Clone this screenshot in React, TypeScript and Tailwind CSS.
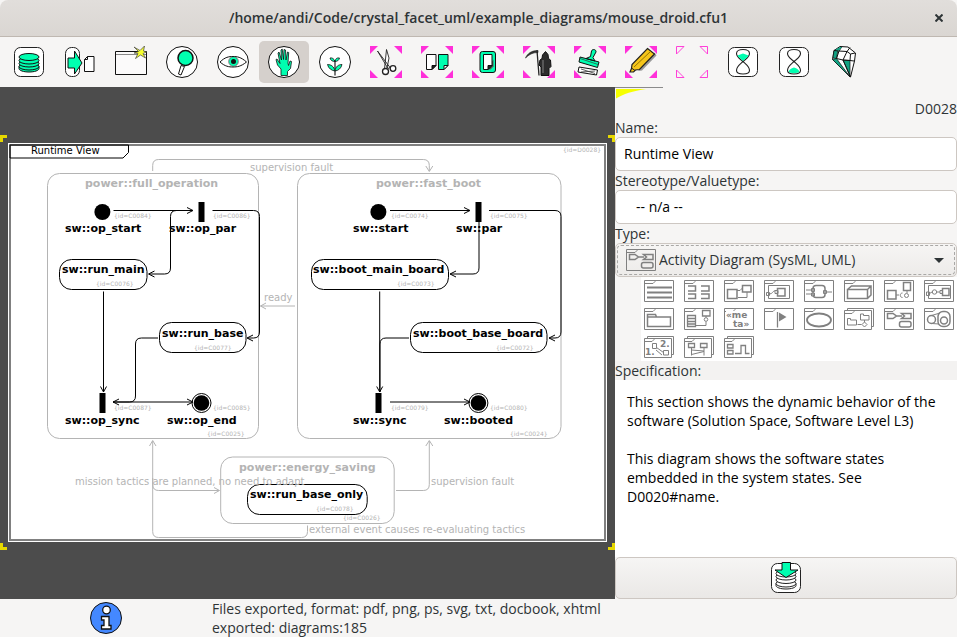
import type { ReactNode } from "react";

const GREEN = "#00ffb0";
const DIM = "#b4b4b4";

/* ---------- toolbar icons (32 x 32) ---------- */

function Round() {
  return <circle cx="16" cy="16" r="15.5" fill="#fff" stroke="#111" />;
}

function Box() {
  return <rect x="1.5" y="1.5" width="29" height="29" rx="6" fill="#fff" stroke="#222" />;
}

function Corners({ hollow = false }: { hollow?: boolean }) {
  return hollow ? (
    <path d="M.5.5H8L.5 8zM31.5.5H24l7.5 7.5zM.5 31.5H8L.5 24zM31.5 31.5H24l7.5-7.5z" fill="none" stroke="#ff40d9" />
  ) : (
    <path d="M0 0h8L0 8zM32 0h-8l8 8zM0 32h8l-8-8zM32 32h-8l8-8z" fill="#ff30d9" />
  );
}

const hourglass =
  "M16 15.5C12 12 9.500 11 9.500 7.500C9.500 4.500 12.500 3.500 16 3.500S22.500 4.500 22.500 7.500C22.500 11 20 12 16 15.500C20 19 22.500 20.500 22.500 24.500C22.500 27 19.500 28 16 28S9.500 27 9.500 24.500C9.500 20.500 12 19 16 15.500z";

const tools: { label: string; active?: boolean; art: ReactNode }[] = [
  {
    label: "Use database",
    art: (
      <>
        <Box />
        <g fill={GREEN} stroke="#111">
          <path d="M6 20.500v2c0 2 4.500 3.500 10 3.500s10-1.500 10-3.500v-2z" />
          <ellipse cx="16" cy="20.500" rx="10" ry="3.500" />
          <ellipse cx="16" cy="17.500" rx="10" ry="3.500" />
          <ellipse cx="16" cy="14.500" rx="10" ry="3.500" />
          <ellipse cx="16" cy="11" rx="10" ry="3.500" />
        </g>
      </>
    ),
  },
  {
    label: "Export",
    art: (
      <>
        <rect x="1.500" y="1.500" width="14" height="29" rx="6" fill="#fff" stroke="#222" />
        <path d="M4 12h6.500V5l7.500 12-7.500 11v-6H4z" fill={GREEN} stroke="#111" />
        <path d="M20.500 13.500l3-3h6.500v15h-9.500zM20.500 13.500h3v-3" fill="#fff" stroke="#111" />
      </>
    ),
  },
  {
    label: "New window",
    art: (
      <>
        <path d="M.5 5.500h31v23H.5z" fill="#fbfafa" stroke="#111" />
        <path d="M1 8.500h30" stroke="#888" />
        <path d="M19 1l6 3.500L29.500 0l-1 5 3 1-3.500 1.500 2.500 4.500-5-3-5 3.500 2.500-5-4-.5 4.500-1.500z" fill="#f6ff2e" stroke="#444" strokeWidth=".7" />
      </>
    ),
  },
  {
    label: "Search",
    art: (
      <>
        <Round />
        <path d="M15 19.500l-2.500 8.500 2.500 1 3.500-8.500z" fill="#fff" stroke="#111" />
        <circle cx="19.500" cy="12" r="7.500" fill={GREEN} stroke="#111" strokeWidth="1.500" />
      </>
    ),
  },
  {
    label: "Navigate",
    art: (
      <>
        <Round />
        <path d="M3 16C8 11 12 10.500 16 10.500S24 11 29.500 16C24 20.500 20 21 16 21S8 20.500 3 16z" fill="#fff" stroke="#111" />
        <circle cx="16.500" cy="15.500" r="3.500" fill="#111" stroke={GREEN} strokeWidth="2" />
        <circle cx="16.500" cy="15.500" r="4.800" fill="none" stroke="#222" strokeWidth=".6" />
      </>
    ),
  },
  {
    label: "Edit",
    active: true,
    art: (
      <>
        <Round />
        <path
          d="M13 29.500v-6.500L9.500 19 8 13.500l1-.5 3 4.500L10 7l1-1 2.500 8L13 4l1.200-1 1.300 10.500L16 3.500l1.500.5.5 10L19.500 6l1.200.5-.7 10.500.5 2.500 1.500-4.500 1.500.5-1 7-3 3v4z"
          fill={GREEN} stroke="#111" strokeWidth=".8" />
      </>
    ),
  },
  {
    label: "Create",
    art: (
      <>
        <Round />
        <path d="M16 29.500V14" stroke="#222" strokeWidth="1.200" />
        <path d="M16 15.500c-1-3-3-4-5-3.500.5 2.500 2.500 3.500 5 3.500zM16 15.500c.5-3 2-4 4.500-3.500-.5 2.500-2.500 3.500-4.500 3.500zM16 25c-1-4.500-4-6.500-7.500-6.500 1 4 4 6 7.500 6.500zM16 25c.5-4.500 3.500-6.500 7-6.500-1 4-3.500 6-7 6.500z" fill={GREEN} stroke="#111" strokeWidth=".8" />
      </>
    ),
  },
  {
    label: "Cut",
    art: (
      <>
        <Corners />
        <path d="M7.500 5L18 22.500l2-1zM16.500 3.500L14.500 23l2.500-1 2-10z" fill="#fff" stroke="#222" strokeWidth=".9" />
        <circle cx="15.500" cy="25.500" r="3" fill="#fff" stroke="#222" strokeWidth="1.300" />
        <circle cx="23" cy="22.500" r="2.800" fill="#fff" stroke="#222" strokeWidth="1.300" />
      </>
    ),
  },
  {
    label: "Copy",
    art: (
      <>
        <Corners />
        <path d="M5.500 8.500H15v11l-4 4H5.500z" fill="#fff" stroke="#111" />
        <path d="M15 19.500h-4v4z" fill="#222" stroke="#111" />
        <path d="M17.500 8.500H27v11l-4 4h-5.500z" fill={GREEN} stroke="#111" />
        <path d="M27 19.500h-4v4z" fill="#fff" stroke="#111" />
      </>
    ),
  },
  {
    label: "Paste",
    art: (
      <>
        <Corners />
        <rect x="8" y="5.500" width="15.500" height="21" rx="2.500" fill={GREEN} stroke="#111" />
        <path d="M13.500 23.500l8-10v7l-3 3z" fill="#555" />
        <path d="M11.500 8.500h8.500v11l-4 4h-4.500z" fill="#fff" stroke="#111" />
        <path d="M20 19.500h-4v4z" fill="#222" stroke="#111" />
      </>
    ),
  },
  {
    label: "Delete",
    art: (
      <>
        <Corners />
        <path d="M14 4.500L16 29.500" stroke="#222" strokeWidth="1.300" />
        <path d="M2.500 12C4.500 7.500 8.500 4.500 15 4.500v2C9.500 6.500 6 8.500 2.500 12z" fill="#333" stroke="#111" strokeWidth=".6" />
        <path d="M19 12.500l.5-3.500 3-3.500 2.500 3 .5 4 2 1.500.5 6.500L26 22.500v7H18v-8.500L16 19l1-5z" fill="#2c2c2c" stroke="#111" />
        <path d="M20 14v13" stroke="#666" strokeWidth="1.500" />
      </>
    ),
  },
  {
    label: "Instantiate",
    art: (
      <>
        <Corners />
        <path d="M6 11l19 5-1.500 5.500L5 16zM12 12.500l4.500-2L17.500 5c1-2.500 5-1.500 4.500 1l-3 5.500 2 3.500z" fill={GREEN} stroke="#111" />
        <path d="M6 12.500l18 6" stroke="#333" strokeWidth=".7" />
        <path d="M5 21l18.500 3-1 5L4 26z" fill="#fff" stroke="#111" />
        <path d="M7 23l14 4.500M7 26l14-1" stroke="#333" strokeWidth=".8" />
      </>
    ),
  },
  {
    label: "Highlight",
    art: (
      <>
        <Corners />
        <path d="M13 25L29.500 6.500l2 3L17 24.500z" fill="#999" />
        <path d="M22.500 2.500L29.500 8 14.500 23.500l-4 .5-2 2H5l1.500-3.500.5-4z" fill="#f5c51a" stroke="#222" strokeWidth="1.200" />
        <path d="M9 21L26 5" stroke="#8a6d00" strokeWidth=".9" />
        <path d="M6.500 22l3.500 2.500" stroke="#222" />
      </>
    ),
  },
  { label: "Reset selection", art: <Corners hollow /> },
  {
    label: "Undo",
    art: (
      <>
        <Box />
        <path d={hourglass} fill="#fff" stroke="#222" strokeWidth="1.100" />
        <path d="M16 15C14 13 11.500 11.500 10.500 9.500L16 7.500l5.500 2C20.500 11.500 18 13 16 15z" fill={GREEN} />
      </>
    ),
  },
  {
    label: "Redo",
    art: (
      <>
        <Box />
        <path d="M10.500 26C11 23.500 13 22.500 16 21.500C19 22.500 21 23.500 21.500 26C20 27.500 12 27.500 10.500 26z" fill={GREEN} />
        <path d={hourglass} fill="none" stroke="#222" strokeWidth="1.100" />
      </>
    ),
  },
  {
    label: "About",
    art: (
      <>
        <path d="M3.500 13.500L5 4.500l6-4 8 .5 7.500 6-1 8L21.500 31z" fill="#fff" stroke="#111" />
        <path d="M3.500 13.500l4-1L21 31zM5 4.500L4 12l3.500.5L9 4zM14 14l7 .5V30z" fill="#12a383" stroke="#111" strokeWidth=".7" />
        <path d="M5 4.500L10 5l8 .5 3-4M10 5L7.500 12.500 14 14l4-8.500 3.500 2.500L26 7M21.500 8L21 14.500l4 .5M21 14.500L14 14l7.500 17M10 5l3-4.500" fill="none" stroke="#111" />
        <path d="M6 4L11 1l2 0-3 3.500z" fill="#12a383" />
      </>
    ),
  },
];

/* ---------- diagram type icons (30 x 22) ---------- */

function Frame() {
  return <path d="M.5.5h29v21H.5zM.5 3.500H9l2-2V.5" />;
}

function FrameStack() {
  return <path d="M.5 2.500h27v19H.5zM3.500 2.500v-2h26v18h-2M.5 5.500H8l2-2v-1" />;
}

function GlyphText({ x, y, children }: { x: number; y: number; children: string }) {
  return (
    <text x={x} y={y} fill="#808080" stroke="none" className="font-['DejaVu_Sans',sans-serif] text-[9px] font-bold">
      {children}
    </text>
  );
}

const activityArt = (
  <>
    <Frame />
    <path d="M3.500 5.500H9l3.500 2.500L9 10.500H3.500zM12.500 8H18M17.500 5.500h9.500v5H17.500l3-2.500z" strokeWidth="1.500" />
    <rect x="15.500" y="13.500" width="11.500" height="5.500" rx="2" strokeWidth="1.500" />
  </>
);

const types: { label: string; art: ReactNode }[] = [
  { label: "List", art: <><Frame /><path d="M3 7.500h25M3 12.500h25M3 17.500h25" strokeWidth="2" /></> },
  {
    label: "Box",
    art: <><Frame /><path d="M4 6h7.500v5H4M17 6h8v5h-8M4 14h7.500v4.500H4M17 14h8v4.500h-8" strokeWidth="1.500" /></>,
  },
  {
    label: "Block definition",
    art: <><Frame /><path d="M3.500 9.500h9.500v9H3.500zM18.500 5.500H27V12h-8.500z" strokeWidth="1.500" /><path d="M13 10.500h3l2.500-2.500M14 17.500h9V12" /></>,
  },
  {
    label: "Internal block",
    art: <><Frame /><path d="M4.500 5.500h21v13h-21z" /><path d="M13.500 8.500H21V16h-7.500z" strokeWidth="1.500" /><path d="M2.500 12.500h3v3h-3zM5.500 14c3 0 3-3 6-3.500M11 10.500h3v3h-3z" /></>,
  },
  {
    label: "Parametric",
    art: <><Frame /><rect x="9" y="5.500" width="12" height="12" rx="3" strokeWidth="1.500" /><path d="M2 10h6M2 14h6M23 12h5M7.500 8.500h3v3h-3zM7.500 13h3v3h-3zM19.500 10.500h3v3h-3z" /></>,
  },
  {
    label: "Deployment",
    art: <><Frame /><path d="M3.500 9.500h20v9h-20zM3.500 9.500l4-3.500H27v9l-3.500 3.500M23.500 9.500L27 6" strokeWidth="1.500" /></>,
  },
  {
    label: "Component",
    art: <><Frame /><path d="M3.500 10.500h8.500v8.500H3.500zM19.500 2.500h7v8h-7z" strokeWidth="1.500" /><path d="M12 15h3M18.500 13c-3 0-3 4.500 0 4.500M23 10.500V13" /><circle cx="22.500" cy="15.500" r="2" /></>,
  },
  {
    label: "Composite structure",
    art: <><Frame /><path d="M4.500 5.500h22v13h-22z" /><path d="M18.500 8.500H25v7h-6.500z" strokeWidth="1.500" /><path d="M2.500 12h3v3.500h-3zM5.500 13.500L8 12M13 12h3M16 10.500h2.500v3H16z" /><circle cx="10.500" cy="12" r="2.200" /></>,
  },
  {
    label: "Package",
    art: <><Frame /><path d="M3.500 18.500v-12h8l1 2.500h14v9.500zM3.500 9h9" strokeWidth="1.500" /></>,
  },
  {
    label: "Class",
    art: <><Frame /><path d="M3.500 7.500h8v11h-8zM3.500 10.500h8M3.500 13.500h8M3.500 16h8M18.500 2.500h7.500v5.500h-7.500z" strokeWidth="1.300" /><path d="M11.500 17.500H22v-4M22 8v1.500" /><circle cx="22" cy="11.500" r="1.800" /></>,
  },
  {
    label: "Profile",
    art: <><Frame /><rect x="2" y="3" width="26" height="17" fill="#fff" stroke="none" /><GlyphText x={2} y={10}>«me</GlyphText><GlyphText x={9} y={19}>ta»</GlyphText></>,
  },
  { label: "Requirements", art: <><Frame /><path d="M13.500 4v15.500" strokeWidth="1.300" /><path d="M15 4.500v9l7.500-4.500z" fill="#808080" stroke="none" /></> },
  { label: "Use case", art: <><Frame /><ellipse cx="15" cy="12" rx="12" ry="6.500" strokeWidth="1.800" /></> },
  {
    label: "Interaction overview",
    art: <><FrameStack /><path d="M3.500 10.500h3V12h6v5h-9zM16.500 6h3v1.500H25V12h-8.500z" /><path d="M13.500 16.500h4M20.500 12v2M20.500 14l2.500 2.500L20.500 19 18 16.500z" /></>,
  },
  { label: "Activity", art: activityArt },
  {
    label: "State machine",
    art: <><Frame /><circle cx="7.500" cy="11.500" r="4" strokeWidth="1.500" /><rect x="14" y="3.500" width="12" height="15" rx="5" strokeWidth="1.500" /><circle cx="20" cy="12.500" r="3.500" strokeWidth="1.500" /><path d="M7.500 7.500L16 5M8 15.500l7 .5" /></>,
  },
  {
    label: "Communication",
    art: <><FrameStack /><GlyphText x={1} y={19}>1.</GlyphText><GlyphText x={16} y={11}>2.</GlyphText><path d="M8.500 7.500h4v5h-4zM19.500 14.500h5v4.500h-5zM12.500 11.500l7 5M12 14l6 5" /></>,
  },
  {
    label: "Sequence",
    art: <><FrameStack /><path d="M4.500 7.500h6v4h-6zM16.500 7.500h6.500v4h-6.500z" strokeWidth="1.300" /><path d="M7.500 11.500v8M20 11.500v8M7.500 14l12.500 1M7.500 18.500L20 15.500" /></>,
  },
  {
    label: "Timing",
    art: <><FrameStack /><path d="M3.500 8.500h5.500v3.500H3.500zM3.500 14.500h5.500V18H3.500z" strokeWidth="1.300" /><path d="M11 17.500h6v-8h4.500v8h4" strokeWidth="1.300" /></>,
  },
];

function TypeIcon({ children, className = "" }: { children: ReactNode; className?: string }) {
  return (
    <svg viewBox="0 0 30 22" fill="none" stroke="#808080" aria-hidden="true" className={`block h-[22px] w-[30px] ${className}`}>
      {children}
    </svg>
  );
}

/* ---------- the state diagram ---------- */

type Tone = "black" | "dim";
const tone = (t: Tone) => (t === "black" ? "#000" : DIM);

function Title({ x, y, t = "black", children }: { x: number; y: number; t?: Tone; children: string }) {
  return <text x={x} y={y} fill={tone(t)} className="text-[11px] font-bold">{children}</text>;
}

function Id({ x, y, id }: { x: number; y: number; id: string }) {
  return <text x={x} y={y} fill={DIM} className="text-[6px]">{`{id=${id}}`}</text>;
}

function Note({ x, y, children }: { x: number; y: number; children: string }) {
  return <text x={x} y={y} fill={DIM} className="text-[10px]">{children}</text>;
}

function State({ x, y, w, h, t = "black" }: { x: number; y: number; w: number; h: number; t?: Tone }) {
  return <rect x={x} y={y} width={w} height={h} rx="12" fill="none" stroke={tone(t)} />;
}

function Wire({ d, t = "black" }: { d: string; t?: Tone }) {
  return <path d={d} fill="none" stroke={tone(t)} />;
}

function Final({ x, y }: { x: number; y: number }) {
  return (
    <>
      <circle cx={x} cy={y} r="9.500" fill="none" stroke="#000" />
      <circle cx={x} cy={y} r="7.800" />
    </>
  );
}

function Diagram() {
  return (
    <svg viewBox="0 87 615 512" role="img" aria-label="Runtime View" className="block h-full w-full font-['DejaVu_Sans',sans-serif]">
      <path d="M0 135h7v3H3v4H0zM615 135h-7v3h4v4h3zM0 550h7v-3H3v-4H0zM615 550h-7v-3h4v-4h3z" fill="#e6d800" />
      <rect x="8" y="143" width="599" height="399" fill="#fff" />
      <rect x="10" y="145" width="595" height="395" fill="none" stroke="#808080" strokeWidth="2" />
      <path d="M10 145H128.500V152.500L123 158H10z" fill="none" stroke="#000" />
      <text x="31" y="154" className="text-[10px]">Runtime View</text>
      <Id x={563} y={152} id="D0028" />

      <Wire t="dim" d="M152.700 171V165.500Q152.700 159.500 158.700 159.500H423.300Q429.300 159.500 429.300 165.500V171M425.800 166L429.300 171.500L432.800 166" />
      <Note x={250} y={171}>supervision fault</Note>

      <State t="dim" x={47.5} y={173.5} w={211} h={265} />
      <Title t="dim" x={85} y={187}>power::full_operation</Title>
      <circle cx="102.400" cy="212" r="8" />
      <Id x={114} y={218} id="C0084" />
      <Title x={65} y={232}>sw::op_start</Title>
      <rect x="198.500" y="202" width="6" height="20" />
      <Id x={213} y={218} id="C0086" />
      <Title x={169} y={232}>sw::op_par</Title>
      <Wire d="M113.500 210.500H192.500M187 207.500L193 210.500L187 213.500" />
      <Wire d="M187 210.500H176.500Q170.500 210.500 170.500 216.500V268Q170.500 274 164.500 274H149M154.500 271L148.500 274L154.500 277" />
      <Wire d="M212.500 210.500H253.500Q259.500 210.500 259.500 216.500V332Q259.500 338 253.500 338H247.500M253 335L247 338L253 341" />
      <State x={59.5} y={259.5} w={87.5} h={30} />
      <Title x={62} y={273}>sw::run_main</Title>
      <Id x={96} y={286} id="C0076" />
      <State x={159.5} y={322.5} w={86.5} h={30} />
      <Title x={162} y={337}>sw::run_base</Title>
      <Id x={194} y={350} id="C0077" />
      <Wire d="M103.500 291.500V392M100.500 386.500L103.500 392L106.500 386.500" />
      <Wire d="M158 338H141.500Q135.500 338 135.500 344V396Q135.500 402 129.500 402H113M119 399L113 402L119 405" />
      <Wire d="M113 402H192.500M187 399L193 402L187 405" />
      <rect x="99.500" y="393" width="6" height="20" />
      <Final x={201.5} y={403} />
      <Id x={114} y={410} id="C0087" />
      <Id x={213} y={410} id="C0085" />
      <Title x={65} y={424}>sw::op_sync</Title>
      <Title x={167} y={424}>sw::op_end</Title>
      <Id x={207} y={436} id="C0025" />

      <Wire t="dim" d="M295 306H260.500M266 303L260.500 306L266 309" />
      <Note x={264} y={301}>ready</Note>

      <State t="dim" x={297.5} y={173.5} w={263.5} h={265} />
      <Title t="dim" x={376} y={187}>power::fast_boot</Title>
      <circle cx="378.400" cy="212" r="8" />
      <Id x={391} y={218} id="C0074" />
      <Title x={353} y={232}>sw::start</Title>
      <rect x="475.500" y="202" width="6" height="20" />
      <Id x={490} y={218} id="C0075" />
      <Title x={456} y={232}>sw::par</Title>
      <Wire d="M390 210.500H469.500M464 207.500L470 210.500L464 213.500" />
      <Wire d="M489 210.500H555Q561 210.500 561 216.500V332Q561 338 555 338H549M555 335L549 338L555 341" />
      <Wire d="M479 222V268Q479 274 473 274H450.500M456 271L450 274L456 277" />
      <State x={311.5} y={259.5} w={137} h={30} />
      <Title x={313} y={273}>sw::boot_main_board</Title>
      <Id x={397} y={286} id="C0073" />
      <State x={410.5} y={322.5} w={136.5} h={30} />
      <Title x={413} y={337}>sw::boot_base_board</Title>
      <Id x={496} y={350} id="C0072" />
      <Wire d="M379.700 291.500V392M376.700 386.500L379.700 392L382.700 386.500" />
      <Wire d="M409 338H386Q380 338 380 344V392" />
      <rect x="375.500" y="393" width="6" height="20" />
      <Wire d="M390 402H469.500M464 399L470 402L464 405" />
      <Final x={478.4} y={403} />
      <Id x={391} y={410} id="C0079" />
      <Id x={490} y={410} id="C0080" />
      <Title x={353} y={424}>sw::sync</Title>
      <Title x={444} y={424}>sw::booted</Title>
      <Id x={510} y={436} id="C0024" />

      <Wire t="dim" d="M152.700 441V531.500Q152.700 537.500 158.700 537.500H301.500Q307.500 537.500 307.500 531.500V525.500M149.500 446L152.700 440.500L156 446" />
      <Wire t="dim" d="M152.700 478V484.500Q152.700 490.500 158.700 490.500H219M214 487.500L219.500 490.500L214 493.500" />
      <State t="dim" x={220.7} y={457} w={173.5} h={66.5} />
      <Title t="dim" x={239} y={471}>power::energy_saving</Title>
      <State x={247.5} y={484.5} w={119.7} h={30} />
      <Title x={250} y={498}>sw::run_base_only</Title>
      <Note x={75} y={485}>mission tactics are planned, no need to adapt</Note>
      <Id x={316} y={511} id="C0078" />
      <Id x={343} y={520} id="C0026" />
      <Wire t="dim" d="M396 490.500H423.300Q429.300 490.500 429.300 484.500V441M425.800 446L429.300 440.500L432.800 446" />
      <Note x={431} y={485}>supervision fault</Note>
      <Note x={309} y={533}>external event causes re-evaluating tactics</Note>
    </svg>
  );
}

/* ---------- window ---------- */

const specification = `This section shows the dynamic behavior of the software (Solution Space, Software Level L3)

This diagram shows the software states embedded in the system states. See D0020#name.`;

export default function App() {
  return (
    <div className="flex min-h-screen flex-col bg-[#f6f5f4] font-['Open_Sans','Noto_Sans',sans-serif] text-sm leading-[19px] text-[#2e3436]">
      <header className="flex h-[37px] items-center rounded-t-lg border-b border-[#bfb8b1] bg-linear-to-b from-[#e1dedb] to-[#dad6d2] px-2">
        <span className="w-5" />
        <h1 className="flex-1 text-center text-sm font-semibold">/home/andi/Code/crystal_facet_uml/example_diagrams/mouse_droid.cfu1</h1>
        <button type="button" aria-label="Close" className="grid size-5 place-items-center">
          <svg viewBox="0 0 8 8" className="size-2" stroke="#2e3436" strokeWidth="2" aria-hidden="true">
            <path d="M.5.500l7 7M7.500.500l-7 7" />
          </svg>
        </button>
      </header>

      <nav aria-label="Tools" className="flex h-[50px] items-center gap-px px-1">
        {tools.map((tool) => (
          <button
            key={tool.label}
            type="button"
            aria-label={tool.label}
            aria-pressed={tool.active ?? false}
            className={`grid h-[42px] w-[50px] place-items-center rounded-[5px] ${tool.active ? "bg-[#d5d0cc]" : ""}`}
          >
            <svg viewBox="0 0 32 32" fill="none" aria-hidden="true" className="size-8">{tool.art}</svg>
          </button>
        ))}
      </nav>

      <main className="flex flex-1">
        <section aria-label="Diagram" className="min-w-0 flex-1 bg-[#4c4c4c]">
          <Diagram />
        </section>

        <aside aria-label="Properties" className="flex w-[342px] flex-col">
          <div className="h-3">
            <svg viewBox="0 0 48 12" className="block h-3 w-12" aria-hidden="true">
              <path d="M0 .5h48" stroke="#8b8b8b" />
              <path d="M1 2h30C18 4 8 7 1 11.500z" fill="#f6ff00" />
            </svg>
          </div>
          <output className="text-right">D0028</output>
          <label htmlFor="name">Name:</label>
          <input id="name" type="text" defaultValue="Runtime View" className="h-[34px] w-full rounded-[5px] border border-[#cdc7c2] bg-white px-2 pb-0.5 text-black" />
          <label htmlFor="stereotype">Stereotype/Valuetype:</label>
          <input id="stereotype" type="text" defaultValue="-- n/a --" className="h-[34px] w-full rounded-[5px] border border-[#cdc7c2] bg-white px-5 pb-0.5 text-black" />
          <label htmlFor="type">Type:</label>
          <div className="relative h-[34px] rounded-[5px] border border-[#cdc7c2] bg-linear-to-b from-[#f6f5f4] to-[#edebe9] p-px">
            <select id="type" defaultValue="activity" className="h-full w-full appearance-none rounded-[4px] border border-dashed border-[#a9a8a6] bg-transparent pb-0.5 pl-[41px]">
              <option value="activity">Activity Diagram (SysML, UML)</option>
            </select>
            <TypeIcon className="pointer-events-none absolute top-[5px] left-2.5">{activityArt}</TypeIcon>
            <svg viewBox="0 0 10 5" className="pointer-events-none absolute top-3.5 right-3 h-[5px] w-2.5" aria-hidden="true">
              <path d="M0 0h10L5 5z" fill="#2e3436" />
            </svg>
          </div>
          <div className="ml-[26px] grid grid-cols-[repeat(auto-fill,30px)] gap-x-2.5 gap-y-1.5 bg-white p-[3px]">
            {types.map((type) => (
              <button key={type.label} type="button" aria-label={type.label}>
                <TypeIcon>{type.art}</TypeIcon>
              </button>
            ))}
          </div>
          <label htmlFor="specification" className="bg-[#f3f2f1]">Specification:</label>
          <textarea id="specification" defaultValue={specification} className="block w-full flex-1 resize-none bg-white p-3 text-black" />
          <button type="button" aria-label="Commit" className="grid h-[42px] place-items-center rounded-[5px] border border-[#cdc7c2] bg-linear-to-b from-[#f6f5f4] to-[#eae8e6]">
            <svg viewBox="0 0 32 32" fill="none" aria-hidden="true" className="size-8">
              <Box />
              <g fill="#fff" stroke="#222">
                <path d="M6 21.500v2c0 2 4.500 3.500 10 3.500s10-1.500 10-3.500v-2z" />
                <ellipse cx="16" cy="21.500" rx="10" ry="3.500" />
                <ellipse cx="16" cy="18" rx="10" ry="3.500" />
                <ellipse cx="16" cy="14.500" rx="10" ry="3.500" />
                <ellipse cx="16" cy="11.500" rx="10" ry="3.500" />
              </g>
              <path d="M12 .5h8.500v7.500H28L16 15.500 5 8h7z" fill={GREEN} stroke="#111" />
            </svg>
          </button>
        </aside>
      </main>

      <footer className="flex h-[38px] items-center">
        <div className="grid w-[212px] place-items-center">
          <svg viewBox="0 0 32 32" className="size-8" role="img" aria-label="Information">
            <circle cx="16" cy="16" r="15.500" fill="#4488ff" stroke="#111" />
            <circle cx="16.500" cy="8" r="3.800" fill="#fff" stroke="#111" strokeWidth="1.300" />
            <path d="M11.500 14.500h7.500v9h2v3.500h-9.500v-3.500h2.500V18h-2.500z" fill="#fff" stroke="#111" strokeWidth="1.300" />
          </svg>
        </div>
        <p role="status">
          Files exported, format: pdf, png, ps, svg, txt, docbook, xhtml
          <br />
          exported: diagrams:185
        </p>
      </footer>
    </div>
  );
}
